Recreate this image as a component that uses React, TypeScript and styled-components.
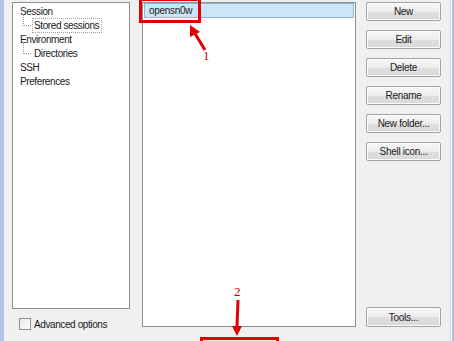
import React from 'react';
import styled, { createGlobalStyle } from 'styled-components';

const GlobalStyle = createGlobalStyle`
  html, body {
    margin: 0;
    padding: 0;
    background: #f0f0f0;
    overflow: hidden;
  }
  body {
    font-family: 'Liberation Sans', Arial, sans-serif;
    color: #1a1a1a;
  }
`;

const treeItems = [
  { label: 'Session', level: 0 },
  { label: 'Stored sessions', level: 1, focused: true },
  { label: 'Environment', level: 0 },
  { label: 'Directories', level: 1 },
  { label: 'SSH', level: 0 },
  { label: 'Preferences', level: 0 },
];

const actions = ['New', 'Edit', 'Delete', 'Rename', 'New folder...', 'Shell icon...'];

const App = () => {
  return (
    <React.Fragment>
      <GlobalStyle />
      <Frame>
        <BlueEdge />
        <Main>
          <LeftColumn>
            <TreeBox>
              {treeItems.map((item) => (
                <TreeRow key={item.label} $level={item.level}>
                  {item.level > 0 && <Connector />}
                  <TreeLabel $focused={!!item.focused}>{item.label}</TreeLabel>
                </TreeRow>
              ))}
            </TreeBox>
            <CheckRow>
              <CheckBox />
              <span>Advanced options</span>
            </CheckRow>
          </LeftColumn>

          <ListBox>
            <SelectedItem>opensn0w</SelectedItem>
          </ListBox>

          <ButtonColumn>
            {actions.map((a) => (
              <Button key={a}>{a}</Button>
            ))}
            <Spacer />
            <Button>Tools...</Button>
          </ButtonColumn>
        </Main>
        <RightEdge />

        {/* red annotations drawn over the dialog */}
        <Highlight style={{ left: 139, top: -2, width: 56, height: 19 }} />
        <Highlight style={{ left: 200, top: 337, width: 73, height: 12 }} />
        <Overlay width="454" height="341">
          <line x1="205" y1="50" x2="194" y2="32" stroke="#e00000" strokeWidth="3" />
          <polygon points="190,25 200,32 190,37" fill="#e00000" />
          <line x1="238" y1="300" x2="237" y2="327" stroke="#e00000" strokeWidth="3" />
          <polygon points="232,326 242,326 237,336" fill="#e00000" />
        </Overlay>
        <Marker style={{ left: 203, top: 49 }}>1</Marker>
        <Marker style={{ left: 234, top: 285 }}>2</Marker>
      </Frame>
    </React.Fragment>
  );
};

const Frame = styled.div`
  position: relative;
  display: flex;
  width: 454px;
  height: 341px;
  overflow: hidden;
  background: #f0f0f0;
`;

const BlueEdge = styled.div`
  width: 4px;
  background: #b2c2e8;
`;

const RightEdge = styled.div`
  width: 3px;
  border-left: 1px solid #d6d6d6;
  box-shadow: inset 1px 0 0 #ffffff;
  background: #aebfe8;
`;

const Main = styled.div`
  flex: 1;
  display: flex;
  padding: 2px 0 0 8px;
`;

const LeftColumn = styled.div`
  width: 118px;
  display: flex;
  flex-direction: column;
`;

const TreeBox = styled.div`
  border: 1px solid #8f8f8f;
  background: #fff;
  padding: 1px 0 0 5px;
  box-sizing: border-box;
  height: 307px;
  font-size: 10px;
  letter-spacing: -0.4px;
`;

const TreeRow = styled.div<{ $level: number }>`
  position: relative;
  height: 14px;
  display: flex;
  align-items: center;
  padding-left: ${(p) => p.$level * 14}px;
`;

const Connector = styled.span`
  position: absolute;
  left: 5px;
  top: -4px;
  width: 7px;
  height: 11px;
  border-left: 1px dotted #9a9a9a;
  border-bottom: 1px dotted #9a9a9a;
`;

const TreeLabel = styled.span<{ $focused: boolean }>`
  padding: 1px 2px 1px 1px;
  border: 1px dotted ${(p) => (p.$focused ? '#a0a0a0' : 'transparent')};
  white-space: nowrap;
`;

const CheckRow = styled.div`
  display: flex;
  align-items: center;
  gap: 3px;
  margin: 9px 0 0 7px;
  font-size: 10px;
  letter-spacing: -0.4px;
`;

const CheckBox = styled.span`
  border: 1px solid #8e8f8f;
  background: linear-gradient(135deg, #e8e8e8, #ffffff);
  box-sizing: border-box;
  width: 12px;
  height: 12px;
`;

const ListBox = styled.div`
  margin-left: 12px;
  width: 214px;
  height: 325px;
  box-sizing: border-box;
  border: 1px solid #8f8f8f;
  background: #fff;
  padding: 0 1px;
`;

const SelectedItem = styled.div`
  height: 13px;
  border: 1px solid #8db6d8;
  background: #cde6f7;
  font-size: 10px;
  letter-spacing: -0.3px;
  line-height: 13px;
  padding-left: 4px;
`;

const ButtonColumn = styled.div`
  margin-left: 10px;
  width: 75px;
  height: 325px;
  display: flex;
  flex-direction: column;
  gap: 9px;
`;

const Spacer = styled.div`
  flex: 1;
`;

const Button = styled.div`
  height: 19px;
  box-sizing: border-box;
  border: 1px solid #a3a3a3;
  border-radius: 2px;
  background: linear-gradient(#f7f7f7 0%, #ececec 50%, #dedede 51%, #d9d9d9 100%);
  box-shadow: inset 0 0 0 1px #fbfbfb;
  display: flex;
  align-items: center;
  justify-content: center;
  font-size: 10px;
  letter-spacing: -0.3px;
  white-space: nowrap;
  &:last-child {
    height: 20px;
  }
`;

const Highlight = styled.div`
  position: absolute;
  border: 3px solid #e40000;
`;

const Overlay = styled.svg`
  position: absolute;
  left: 0;
  top: 0;
  pointer-events: none;
`;

const Marker = styled.span`
  position: absolute;
  font-family: 'Liberation Serif', 'Times New Roman', serif;
  font-size: 13px;
  color: #d00000;
  line-height: 1;
`;

export default App;
